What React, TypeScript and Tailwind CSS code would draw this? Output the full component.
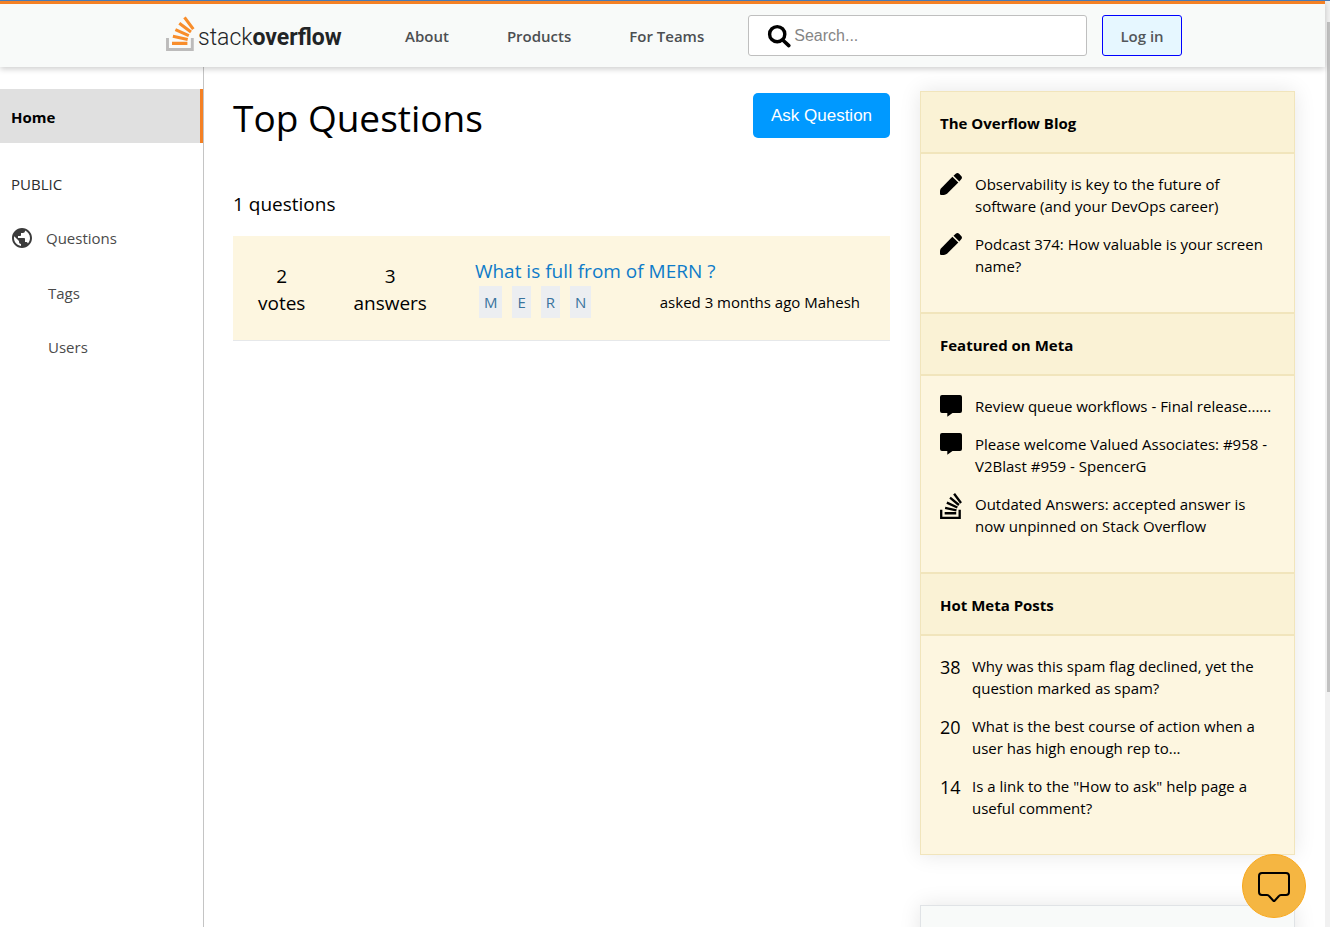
import type { ReactNode } from "react";
import { MdPublic } from "react-icons/md";

function LogoMark() {
  return (
    <svg viewBox="0 0 29 35" className="h-[35px] w-[29px] shrink-0" fill="none" aria-hidden="true">
      <path d="M1.500 22V33.500H26.300V22" stroke="#bcbbbb" strokeWidth="2.900" />
      <path
        d="M6 27.400H21.400M6.900 20.300 21.700 23.600M9.400 13.700 22.800 19.700M13.300 7.200 25 16M18.500 1.300 27.300 13.200"
        stroke="#f88d2b"
        strokeWidth="3.100"
      />
    </svg>
  );
}

function StackIcon() {
  return (
    <svg viewBox="1.89 0 20.22 24" className="h-[26px] w-[22px]" aria-hidden="true">
      <path d="M15.725 0l-1.72 1.277 6.39 8.588 1.716-1.277L15.725 0zm-3.94 3.418l-1.369 1.644 8.225 6.85 1.369-1.644-8.225-6.85zm-3.15 4.465l-.905 1.94 9.702 4.517.904-1.94-9.701-4.517zm-1.85 4.86l-.44 2.093 10.473 2.201.44-2.092-10.473-2.203zM6.155 17.603v2.13h10.66v-2.13H6.155z" />
      <path d="M1.89 15.47V24h19.19v-8.53h-2.133v6.397H4.021v-6.396H1.89z" />
    </svg>
  );
}

function PencilIcon() {
  return (
    <svg viewBox="0 0 22 22" className="size-[22px]" aria-hidden="true">
      <path d="M12.400 3.700 18.300 9.600 7 20.800Q5.600 21.900 3.900 21.900H.8Q0 21.900 0 21.100V18Q0 16.400.9 15.400z" />
      <path d="M13.500 2.700 15.700.800q1.700-1.400 3.400 0L21.200 3q1.500 1.700 0 3.300L19.300 8.500z" />
    </svg>
  );
}

function CommentIcon() {
  return (
    <svg viewBox="0 0 22 22" className="size-[22px]" aria-hidden="true">
      <path d="M2 0H20Q22 0 22 2V16Q22 18 20 18H12.500L7.300 21.800V18H2Q0 18 0 16V2Q0 0 2 0z" />
    </svg>
  );
}

function SearchIcon() {
  return (
    <svg viewBox="0 0 24 24" className="size-6 shrink-0" fill="none" stroke="#000" aria-hidden="true">
      <circle cx="10.200" cy="10.200" r="7.600" strokeWidth="3.400" />
      <path d="M16 16.200 21.800 21.600" strokeWidth="3.600" strokeLinecap="round" />
    </svg>
  );
}

type Item = { mark: ReactNode; text: string };

const blog: Item[] = [
  { mark: <PencilIcon />, text: "Observability is key to the future of software (and your DevOps career)" },
  { mark: <PencilIcon />, text: "Podcast 374: How valuable is your screen name?" },
];

const meta: Item[] = [
  { mark: <CommentIcon />, text: "Review queue workflows - Final release......" },
  { mark: <CommentIcon />, text: "Please welcome Valued Associates: #958 - V2Blast #959 - SpencerG" },
  { mark: <StackIcon />, text: "Outdated Answers: accepted answer is now unpinned on Stack Overflow" },
];

const hot: Item[] = [
  { mark: "38", text: "Why was this spam flag declined, yet the question marked as spam?" },
  { mark: "20", text: "What is the best course of action when a user has high enough rep to..." },
  { mark: "14", text: 'Is a link to the "How to ask" help page a useful comment?' },
];

function Section({ title, items, numbered }: { title: string; items: Item[]; numbered?: boolean }) {
  return (
    <section>
      <h2 className="flex h-[62px] items-center border border-[#f1e5bc] bg-[#faf2d5] px-[19px] pt-0.5 text-[15px] font-bold">
        {title}
      </h2>
      <ul className="flex flex-col gap-4 border border-[#f1e5bc] bg-[#fdf6e0] pt-[19px] pr-[18px] pb-[35px] pl-[19px]">
        {items.map((item) => (
          <li key={item.text} className={numbered ? "flex gap-3" : "flex gap-[13px]"}>
            <span className={numbered ? "w-5 shrink-0 text-lg leading-6" : "w-[22px] shrink-0"}>
              {item.mark}
            </span>
            <a href="#" className="text-[15px] leading-[22px]">
              {item.text}
            </a>
          </li>
        ))}
      </ul>
    </section>
  );
}

function Stat({ value, label }: { value: number; label: string }) {
  return (
    <div className="flex flex-col items-center text-[19px] leading-[27px]">
      <span>{value}</span>
      <span>{label}</span>
    </div>
  );
}

function Header() {
  return (
    <header className="relative z-10 flex h-[66px] shrink-0 items-center border-t-[3px] border-[#f48024] bg-[#f8faf9] pr-[143px] pl-[166px] shadow-[0_2px_6px_rgba(0,0,0,0.2)]">
      <a
        href="#"
        aria-label="stack overflow"
        className="flex w-[176px] shrink-0 items-start gap-[3px] text-[23px] leading-9 text-[#222426]"
      >
        <LogoMark />
        <span className="pt-1 font-['Roboto',sans-serif] font-light whitespace-nowrap">
          stack<b className="font-bold">overflow</b>
        </span>
      </a>
      <nav className="ml-[63px] flex shrink-0 gap-[58px] pt-0.5 text-[15px] font-semibold text-[#4c4f52]">
        <a href="#">About</a>
        <a href="#">Products</a>
        <a href="#">For Teams</a>
      </nav>
      <label className="ml-11 flex h-[41px] min-w-0 flex-1 items-center rounded-[3px] border border-[#bfbfbf] bg-white pl-[18px]">
        <SearchIcon />
        <input
          type="text"
          aria-label="Search"
          placeholder="Search..."
          className="ml-[3px] w-full min-w-0 bg-transparent font-['Liberation_Sans',sans-serif] text-base outline-none placeholder:text-[#858585]"
        />
      </label>
      <button className="ml-[15px] h-[41px] w-20 shrink-0 rounded-[3px] border border-[#0000ff] bg-[#e6f7ff] pt-0.5 text-[15px] font-semibold text-[#53575a]">
        Log in
      </button>
    </header>
  );
}

function Sidebar() {
  return (
    <nav className="w-[204px] shrink-0 border-r border-[#c4c4c4] pt-[22px] text-[15px] text-[#4a4a4a]">
      <a
        href="#"
        className="flex h-[54px] items-center border-r-[3px] border-[#f48024] bg-[#e0e0e0] pt-0.5 pl-[11px] font-bold text-black"
      >
        Home
      </a>
      <p className="mt-3.5 flex h-[54px] items-center pl-[11px] text-[#2c2c2c]">PUBLIC</p>
      <a href="#" className="flex h-[54px] items-center gap-3 pl-2.5">
        <MdPublic className="size-6 text-[#3b3b3b]" />
        Questions
      </a>
      <a href="#" className="flex h-[54px] items-center pt-0.5 pl-12">Tags</a>
      <a href="#" className="flex h-[54px] items-center pt-0.5 pl-12">Users</a>
    </nav>
  );
}

export default function App() {
  return (
    <div className="flex h-screen flex-col overflow-hidden border-t border-[#4a7ab5] bg-white font-['Open_Sans','Noto_Sans',sans-serif] text-black">
      <div className="flex min-h-0 flex-1">
        <div className="flex min-w-0 flex-1 flex-col">
          <Header />
          <div className="flex min-h-0 flex-1">
            <Sidebar />
            <main className="flex min-w-0 flex-1 gap-[30px] overflow-hidden pt-6 pr-[30px] pl-[29px]">
              <div className="min-w-0 flex-1">
                <div className="flex items-start justify-between pt-0.5">
                  <h1 className="text-[37px] leading-[50px]">Top Questions</h1>
                  <button className="h-[45px] w-[137px] rounded-[5px] bg-[#0099ff] font-['Liberation_Sans',sans-serif] text-[17px] text-white">
                    Ask Question
                  </button>
                </div>
                <p className="mt-[46px] text-[19px] leading-[30px]">1 questions</p>
                <article className="mt-[17px] flex h-[105px] border-b border-[#e6e8ea] bg-[#fdf6e0] pl-[25px]">
                  <div className="flex shrink-0 gap-12 pt-[27px]">
                    <Stat value={2} label="votes" />
                    <Stat value={3} label="answers" />
                  </div>
                  <div className="ml-12 min-w-0 flex-1 pt-5 pr-[30px]">
                    <a href="#" className="block text-[19px] leading-[30px] text-[#0e7bc9]">
                      What is full from of MERN ?
                    </a>
                    <div className="flex items-center justify-between">
                      <div className="flex gap-2.5 pl-1 text-[15px] leading-8 text-[#39739d]">
                        {["M", "E", "R", "N"].map((tag) => (
                          <span key={tag} className="bg-[#eceef1] px-[5px]">
                            {tag}
                          </span>
                        ))}
                      </div>
                      <p className="text-[15px]">asked 3 months ago Mahesh</p>
                    </div>
                  </div>
                </article>
              </div>
              <aside className="flex w-[375px] shrink-0 flex-col gap-[50px]">
                <div className="shadow-[0_0_20px_rgba(0,0,0,0.1)]">
                  <Section title="The Overflow Blog" items={blog} />
                  <Section title="Featured on Meta" items={meta} />
                  <Section title="Hot Meta Posts" items={hot} numbered />
                </div>
                <div className="h-16 shrink-0 border border-[#e0e3e6] bg-[#f8faf9] shadow-[0_0_20px_rgba(0,0,0,0.1)]" />
              </aside>
            </main>
          </div>
        </div>
        <div className="w-[5px] shrink-0 bg-[#f1f1f1] pt-[21px] pl-0.5" aria-hidden="true">
          <div className="h-[74%] bg-[#c1c1c1]" />
        </div>
      </div>
      <button
        aria-label="Open chat"
        className="fixed right-6 bottom-[9px] z-20 flex size-16 items-center justify-center rounded-full border border-[#f8a81c] bg-[#f5b642]"
      >
        <svg viewBox="0 0 32 32" className="size-8" fill="none" stroke="#000" strokeWidth="2" strokeLinejoin="round" aria-hidden="true">
          <path d="M4 3H28Q31 3 31 6V22Q31 25 28 25H23Q21.500 25 20.500 26.500L16 31.500 11.500 26.500Q10.500 25 9 25H4Q1 25 1 22V6Q1 3 4 3z" />
        </svg>
      </button>
    </div>
  );
}
